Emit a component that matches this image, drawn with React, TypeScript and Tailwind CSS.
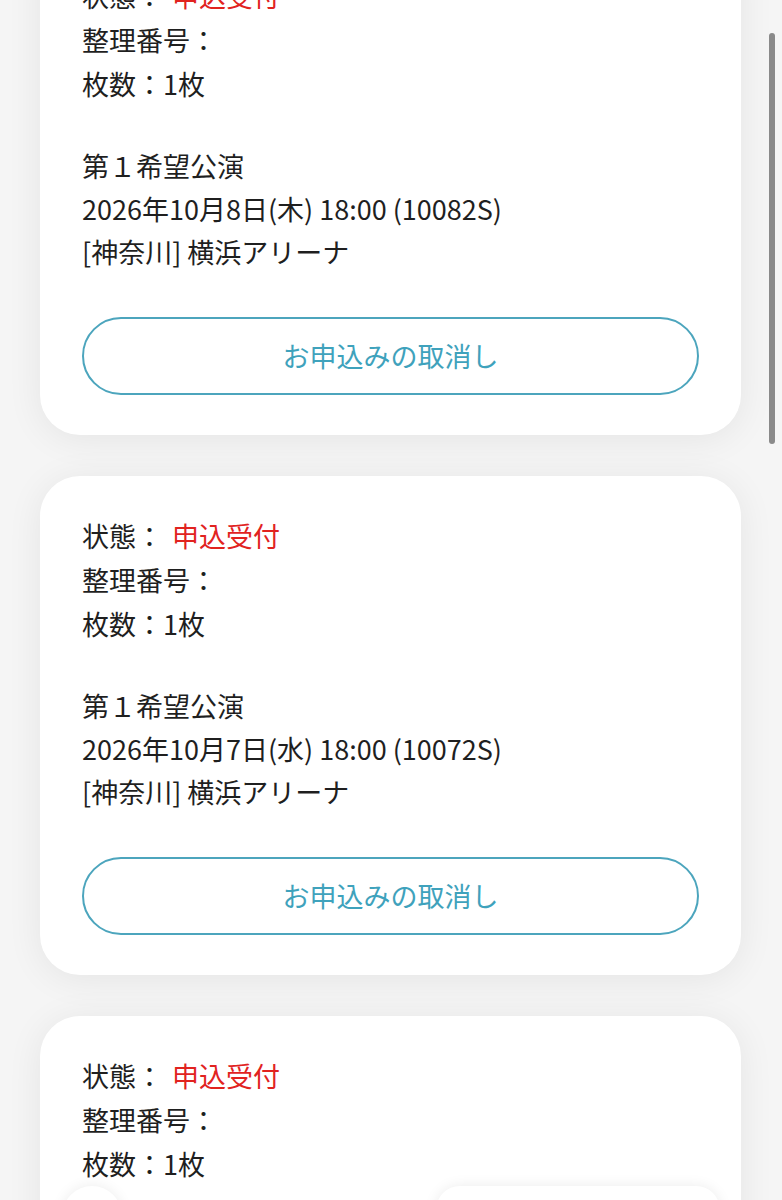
import React from "react";

type Entry = {
  date: string;
};

const entries: Entry[] = [
  { date: "2026年10月8日(木) 18:00 (10082S)" },
  { date: "2026年10月7日(水) 18:00 (10072S)" },
  { date: "2026年10月6日(火) 18:00 (10062S)" },
];

const font = { fontFamily: '"Noto Sans CJK JP", "Noto Sans", sans-serif' };

function EntryCard({ entry, first }: { entry: Entry; first?: boolean }) {
  return (
    <div
      className={
        "rounded-[40px] bg-white px-[42px] pt-[38px] pb-[40px] shadow-[0_4px_36px_rgba(0,0,0,0.07)] " +
        (first ? "-mt-[64px]" : "")
      }
    >
      <div className="text-[27px] leading-[44px] text-[#1f1f1f]">
        <p>
          状態：<span className="ml-[9px] text-[#e1231f]">申込受付</span>
        </p>
        <p>整理番号：</p>
        <p>枚数：1枚</p>
      </div>
      <div className="mt-[38px] text-[27px] leading-[43px] text-[#1f1f1f]">
        <p>第１希望公演</p>
        <p>{entry.date}</p>
        <p>[神奈川] 横浜アリーナ</p>
      </div>
      <button className="mt-[44px] flex h-[78px] w-full items-center justify-center rounded-full border-2 border-[#4ca5bd] bg-white text-[27px] text-[#3fa2bc]">
        お申込みの取消し
      </button>
    </div>
  );
}

export default function App() {
  return (
    <div className="relative h-[1200px] w-full overflow-hidden bg-[#f5f5f5]" style={font}>
      <div className="flex flex-col gap-[41px] pl-[40px] pr-[41px]">
        {entries.map((e, i) => (
          <EntryCard key={i} entry={e} first={i === 0} />
        ))}
      </div>

      {/* scroll indicator */}
      <div className="absolute right-[7px] top-[33px] h-[411px] w-[6px] rounded-full bg-[#8a8a8a]" />

      {/* floating bottom bar, cut off by the viewport */}
      <div className="absolute left-[62px] top-[1186px] h-[60px] w-[60px] rounded-full bg-white shadow-[0_0_14px_rgba(0,0,0,0.08)]" />
      <div className="absolute left-[436px] top-[1186px] h-[60px] w-[284px] rounded-[24px] bg-white shadow-[0_0_14px_rgba(0,0,0,0.08)]" />
    </div>
  );
}
